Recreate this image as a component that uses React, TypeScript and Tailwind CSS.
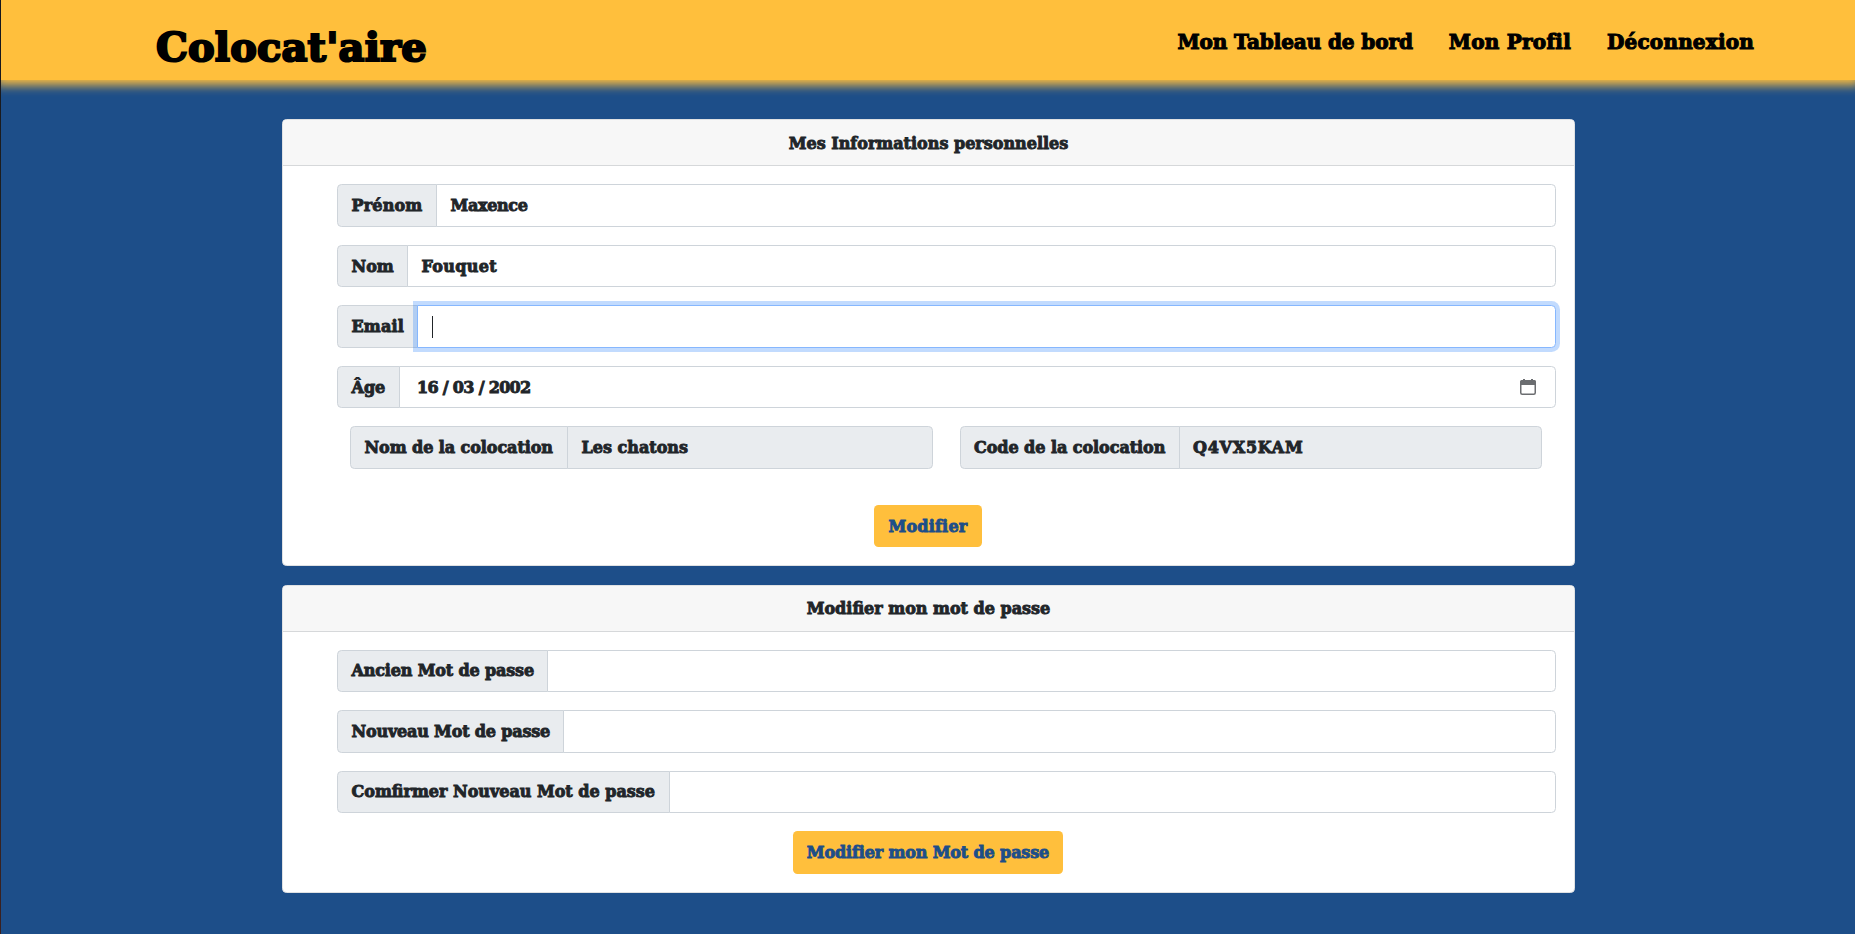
import type { ReactNode } from 'react';

const addonBase =
  'flex shrink-0 items-center rounded-l-[4.5px] border border-[#ced4da] bg-[#e9ecef] pl-[13.5px] whitespace-nowrap';
const controlBase =
  '-ml-px flex min-w-0 flex-1 items-center rounded-r-[4.5px] border pl-[13.5px] whitespace-nowrap';

type FieldProps = {
  label: string;
  addonClass: string;
  controlClass?: string;
  children?: ReactNode;
};

function Field({ label, addonClass, controlClass = 'border-[#ced4da] bg-white', children }: FieldProps) {
  return (
    <div className="mb-[18px] flex h-[42.5px] items-stretch">
      <span className={`${addonBase} ${addonClass}`}>{label}</span>
      <div className={`${controlBase} ${controlClass}`}>{children}</div>
    </div>
  );
}

function Card({ title, children }: { title: string; children: ReactNode }) {
  return (
    <section className="rounded-[4.5px] border border-[#dfe1e3] bg-white">
      <h2 className="h-[46px] rounded-t-[3.5px] border-b border-[#d6d8da] bg-[#f7f7f7] pt-[9.5px] text-center">
        {title}
      </h2>
      <div className="p-[18px]">{children}</div>
    </section>
  );
}

function CalendarIcon() {
  return (
    <svg width="16" height="16" viewBox="0 0 16 16" className="mr-[19px] ml-auto" fill="none">
      <path d="M3 0h2v2H3zM11 0h2v2h-2z" fill="#6b6d70" />
      <path d="M2 1h12a2 2 0 0 1 2 2v3H0V3a2 2 0 0 1 2-2z" fill="#6b6d70" />
      <rect x="0.75" y="1.75" width="14.5" height="13.5" rx="1.5" stroke="#6b6d70" strokeWidth="1.5" />
    </svg>
  );
}

const buttonBase =
  'flex h-[42.5px] items-center justify-center rounded-[4.5px] bg-[#ffbf3c] text-[#1d4e89] [-webkit-text-stroke:0.9px_#1d4e89]';

export default function App() {
  return (
    <div className="flex h-[934px] overflow-hidden bg-[#1d4e89] font-['DejaVu_Serif',serif] text-[16px] leading-[27px] font-bold text-[#212529] [-webkit-text-stroke:0.9px_#212529]">
      <div className="relative z-10 w-px shrink-0 bg-linear-to-b from-[#16161c] via-[#2b2a20] to-[#3a2020]" />
      <div className="min-w-0 flex-1">
        <header className="flex h-[80px] items-start justify-between bg-[#ffbf3c] pr-[101px] pl-[155px] text-black shadow-[0_0_10px_5px_#ffbf3c] [-webkit-text-stroke:1.1px_#000]">
          <a className="pt-[17px] text-[40px] leading-[60px] tracking-[0.15px] [-webkit-text-stroke:2.2px_#000]">
            Colocat'aire
          </a>
          <nav className="flex pt-[26px] text-[20px] leading-[32px]">
            <a className="mr-[36px] tracking-[-0.1px]">Mon Tableau de bord</a>
            <a className="mr-[36px] tracking-[0.25px]">Mon Profil</a>
            <a className="tracking-[0.2px]">Déconnexion</a>
          </nav>
        </header>

        <main className="ml-[281px] flex w-[1293px] flex-col gap-[18.2px] pt-[39.4px]">
          <Card title="Mes Informations personnelles">
            <div className="pl-[36px]">
              <Field label="Prénom" addonClass="w-[100px] tracking-[0.18px]">
                <span className="tracking-[-0.33px]">Maxence</span>
              </Field>
              <Field label="Nom" addonClass="w-[71px]">
                <span className="tracking-[0.33px]">Fouquet</span>
              </Field>
              <Field
                label="Email"
                addonClass="w-[81px] tracking-[0.16px]"
                controlClass="z-10 border-[#86b7fe] bg-white shadow-[0_0_0_4px_rgba(13,110,253,0.25)]"
              >
                <span className="ml-[0.5px] h-[22px] w-px bg-[#212529]" />
              </Field>
              <Field label="Âge" addonClass="w-[63px]">
                <span className="pl-[3.5px] tracking-[-0.68px]">16 / 03 / 2002</span>
                <CalendarIcon />
              </Field>
              <div className="mb-[18px] grid grid-cols-2 gap-[27px] pr-[14px] pl-[13px]">
                <Field
                  label="Nom de la colocation"
                  addonClass="w-[218px] tracking-[-0.07px]"
                  controlClass="border-[#ced4da] bg-[#e9ecef]"
                >
                  <span>Les chatons</span>
                </Field>
                <Field
                  label="Code de la colocation"
                  addonClass="w-[220px] tracking-[-0.05px]"
                  controlClass="border-[#ced4da] bg-[#e9ecef]"
                >
                  <span className="tracking-[0.75px]">Q4VX5KAM</span>
                </Field>
              </div>
            </div>
            <div className="flex justify-center pr-px">
              <button className={`${buttonBase} w-[108px] tracking-[0.2px]`}>Modifier</button>
            </div>
          </Card>

          <Card title="Modifier mon mot de passe">
            <div className="pl-[36px]">
              <Field label="Ancien Mot de passe" addonClass="w-[211px] tracking-[-0.15px]" />
              <Field label="Nouveau Mot de passe" addonClass="w-[227px] tracking-[-0.17px]" />
              <Field label="Comfirmer Nouveau Mot de passe" addonClass="w-[333px]" />
            </div>
            <div className="flex justify-center pr-px">
              <button className={`${buttonBase} w-[270px] tracking-[-0.13px]`}>Modifier mon Mot de passe</button>
            </div>
          </Card>
        </main>
      </div>
    </div>
  );
}
